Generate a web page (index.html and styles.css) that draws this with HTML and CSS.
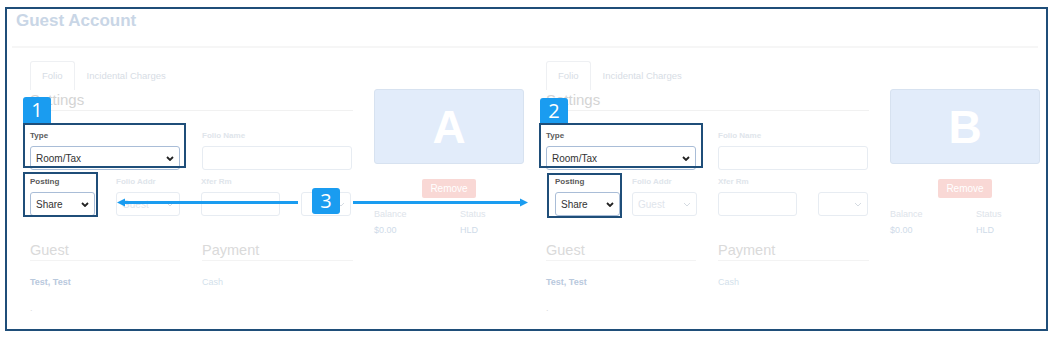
FILE: index.html
```html
<!DOCTYPE html>
<html lang="en">
<head>
    <meta charset="UTF-8">
    <meta name="viewport" content="width=device-width, initial-scale=1.0">
    <link rel="stylesheet" href="styles.css">
</head>
<body>
    <div class="frame">
        <h1 class="page-title">Guest Account</h1>
        <div class="divider"></div>

        <div class="panels">
            <!-- Folio A -->
            <div class="panel">
                <div class="tabs">
                    <div class="tab active">Folio</div>
                    <div class="tab">Incidental Charges</div>
                </div>
                <div class="panel-body">
                    <div class="form-col">
                        <h2 class="settings-title">Settings</h2>
                        <div class="form-row row-type">
                            <div class="field w-wide field-hl">
                                <label>Type</label>
                                <div class="select select-hl"><span>Room/Tax</span><svg class="chev" viewBox="0 0 8 5"><path d="M1 1l3 3 3-3"/></svg></div>
                            </div>
                            <div class="field w-wide">
                                <label>Folio Name</label>
                                <div class="input"></div>
                            </div>
                        </div>
                        <div class="form-row row-posting">
                            <div class="field w-post field-hl posting-field">
                                <label>Posting</label>
                                <div class="select select-hl"><span>Share</span><svg class="chev" viewBox="0 0 8 5"><path d="M1 1l3 3 3-3"/></svg></div>
                            </div>
                            <div class="field w-addr">
                                <label>Folio Addr</label>
                                <div class="select"><span>Guest</span><svg class="chev faint" viewBox="0 0 8 5"><path d="M1 1l3 3 3-3"/></svg></div>
                            </div>
                            <div class="field w-xfer">
                                <label>Xfer Rm</label>
                                <div class="input"></div>
                            </div>
                            <div class="field w-small">
                                <label>&nbsp;</label>
                                <div class="select"><span></span><svg class="chev faint" viewBox="0 0 8 5"><path d="M1 1l3 3 3-3"/></svg></div>
                            </div>
                        </div>
                        <div class="info-grid">
                            <div>
                                <h3 class="info-title">Guest</h3>
                                <div class="info-value guest-name">Test, Test</div>
                                <div class="info-dot">.</div>
                            </div>
                            <div>
                                <h3 class="info-title">Payment</h3>
                                <div class="info-value">Cash</div>
                            </div>
                        </div>
                    </div>
                    <div class="side-col">
                        <div class="folio-card">A</div>
                        <div class="remove-btn">Remove</div>
                        <div class="stats">
                            <span class="stat-label">Balance</span>
                            <span class="stat-label">Status</span>
                            <span class="stat-value">$0.00</span>
                            <span class="stat-value">HLD</span>
                        </div>
                    </div>
                </div>
            </div>

            <!-- Folio B -->
            <div class="panel panel-b">
                <div class="tabs">
                    <div class="tab active">Folio</div>
                    <div class="tab">Incidental Charges</div>
                </div>
                <div class="panel-body">
                    <div class="form-col">
                        <h2 class="settings-title">Settings</h2>
                        <div class="form-row row-type">
                            <div class="field w-wide field-hl">
                                <label>Type</label>
                                <div class="select select-hl"><span>Room/Tax</span><svg class="chev" viewBox="0 0 8 5"><path d="M1 1l3 3 3-3"/></svg></div>
                            </div>
                            <div class="field w-wide">
                                <label>Folio Name</label>
                                <div class="input"></div>
                            </div>
                        </div>
                        <div class="form-row row-posting">
                            <div class="field w-post field-hl posting-field">
                                <label>Posting</label>
                                <div class="select select-hl"><span>Share</span><svg class="chev" viewBox="0 0 8 5"><path d="M1 1l3 3 3-3"/></svg></div>
                            </div>
                            <div class="field w-addr">
                                <label>Folio Addr</label>
                                <div class="select"><span>Guest</span><svg class="chev faint" viewBox="0 0 8 5"><path d="M1 1l3 3 3-3"/></svg></div>
                            </div>
                            <div class="field w-xfer">
                                <label>Xfer Rm</label>
                                <div class="input"></div>
                            </div>
                            <div class="field w-small">
                                <label>&nbsp;</label>
                                <div class="select"><span></span><svg class="chev faint" viewBox="0 0 8 5"><path d="M1 1l3 3 3-3"/></svg></div>
                            </div>
                        </div>
                        <div class="info-grid">
                            <div>
                                <h3 class="info-title">Guest</h3>
                                <div class="info-value guest-name">Test, Test</div>
                                <div class="info-dot">.</div>
                            </div>
                            <div>
                                <h3 class="info-title">Payment</h3>
                                <div class="info-value">Cash</div>
                            </div>
                        </div>
                    </div>
                    <div class="side-col">
                        <div class="folio-card">B</div>
                        <div class="remove-btn">Remove</div>
                        <div class="stats">
                            <span class="stat-label">Balance</span>
                            <span class="stat-label">Status</span>
                            <span class="stat-value">$0.00</span>
                            <span class="stat-value">HLD</span>
                        </div>
                    </div>
                </div>
            </div>
        </div>

        <!-- annotation overlay -->
        <svg class="arrows" viewBox="0 0 1039 320" width="1039" height="320">
            <line x1="291" y1="193.5" x2="117" y2="193.5"/>
            <polygon points="110,193.5 118,189.5 118,197.5"/>
            <line x1="346" y1="193.5" x2="514" y2="193.5"/>
            <polygon points="521,193.5 513,189.5 513,197.5"/>
        </svg>
        <div class="callout box-type-a"></div>
        <div class="callout box-post-a"></div>
        <div class="callout box-type-b"></div>
        <div class="callout box-post-b"></div>
        <div class="badge badge-1">1</div>
        <div class="badge badge-2">2</div>
        <div class="badge badge-3">3</div>
    </div>
</body>
</html>
```

FILE: styles.css
```css
body {
    margin: 0;
    font-family: "Liberation Sans", Arial, sans-serif;
    background-color: #fff;
}

.frame {
    position: relative;
    margin: 7px 0 0 5px;
    width: 1039px;
    height: 320px;
    border: 2px solid #1f4e79;
    overflow: hidden;
}

.page-title {
    margin: 0;
    padding: 2px 0 0 9px;
    font-size: 17px;
    line-height: 20px;
    color: #c9d6e6;
}

.divider {
    margin: 15px 8px 0 5px;
    border-top: 2px solid #f6f6f6;
}

.panels {
    display: flex;
    padding: 13px 0 0 23px;
}

.panel {
    flex: none;
    width: 516px;
}

/* tabs */
.tabs {
    display: flex;
    height: 29px;
}

.tab {
    padding: 0 11px;
    font-size: 9.5px;
    line-height: 28px;
    color: #d7dde5;
    border: 1px solid transparent;
    border-bottom: none;
    border-radius: 3px 3px 0 0;
}

.tab.active {
    border-color: #eef0f3;
}

.panel-body {
    display: grid;
    grid-template-columns: 323px 150px;
    column-gap: 21px;
}

/* form */
.settings-title {
    margin: 0;
    font-size: 15px;
    font-weight: normal;
    line-height: 20px;
    color: #d4d4d4;
    border-bottom: 1px solid #f1f1f1;
}

.form-row {
    display: flex;
    gap: 21px;
}

.row-type {
    margin-top: 20px;
    gap: 22px;
}

.row-posting {
    margin-top: 7px;
}

.field label {
    display: block;
    font-size: 8px;
    font-weight: bold;
    line-height: 10px;
    margin-bottom: 5px;
    color: #e0e5eb;
}

.field-hl label {
    color: #5a5a5a;
}

.w-wide { width: 150px; }
.w-post { width: 65px; }
.w-addr { width: 64px; }
.w-xfer { width: 79px; }
.w-small { width: 50px; }

.panel-b .posting-field {
    margin-left: 9px;
    margin-right: -9px;
}

.panel-b .w-addr {
    width: 65px;
}

.select,
.input {
    box-sizing: border-box;
    height: 24px;
    border: 1px solid #e7ecf2;
    border-radius: 3px;
}

.select {
    display: flex;
    align-items: center;
    justify-content: space-between;
    padding: 0 5px;
    font-size: 10px;
    color: #dfe5ec;
}

.select-hl {
    border-color: #a9bdd7;
    color: #333;
}

.chev {
    width: 8px;
    height: 5px;
    fill: none;
    stroke: #222;
    stroke-width: 1.8;
}

.chev.faint {
    stroke: #d5dbe2;
    stroke-width: 1;
}

/* guest / payment */
.info-grid {
    display: grid;
    grid-template-columns: 150px 151px;
    column-gap: 22px;
    margin-top: 24px;
}

.info-title {
    margin: 0;
    font-size: 14.5px;
    font-weight: normal;
    line-height: 20px;
    color: #dadada;
    border-bottom: 1px solid #f3f3f3;
}

.info-value {
    margin-top: 15px;
    font-size: 9px;
    line-height: 12px;
    color: #d3dfeb;
}

.guest-name {
    font-weight: bold;
    color: #b9c9dd;
}

.info-dot {
    margin-top: 15px;
    font-size: 9px;
    color: #dcdcdc;
}

/* folio card */
.folio-card {
    margin-top: -1px;
    height: 75px;
    box-sizing: border-box;
    display: flex;
    align-items: center;
    justify-content: center;
    background-color: #e2ecfa;
    border: 1px solid #d7e2f0;
    border-radius: 3px;
    font-size: 46px;
    font-weight: bold;
    color: #fff;
}

.remove-btn {
    margin: 15px auto 0;
    width: 54px;
    height: 19px;
    line-height: 19px;
    text-align: center;
    background-color: #f9d8d5;
    border-radius: 2px;
    font-size: 10px;
    color: #fff;
}

.stats {
    display: grid;
    grid-template-columns: 86px 64px;
    row-gap: 4px;
    margin-top: 10px;
    font-size: 9px;
    line-height: 12px;
}

.stat-label {
    color: #dde3ea;
}

.stat-value {
    color: #cfdbe9;
}

/* annotations */
.arrows {
    position: absolute;
    left: 0;
    top: 0;
}

.arrows line {
    stroke: #1a9cf0;
    stroke-width: 3;
}

.arrows polygon {
    fill: #1a9cf0;
}

.callout {
    position: absolute;
    box-sizing: border-box;
    border: 2px solid #1f4e79;
}

.box-type-a { left: 16px; top: 114px; width: 163px; height: 45px; }
.box-post-a { left: 16px; top: 163px; width: 75px; height: 45px; }
.box-type-b { left: 532px; top: 114px; width: 164px; height: 45px; }
.box-post-b { left: 540px; top: 164px; width: 75px; height: 45px; }

.badge {
    position: absolute;
    width: 28px;
    height: 26px;
    background-color: #1a9cf0;
    border-radius: 3px;
    font-family: "Open Sans", sans-serif;
    font-size: 20px;
    line-height: 26px;
    text-align: center;
    color: #fff;
}

.badge-1 { left: 16px; top: 88px; border-radius: 3px 3px 0 0; }
.badge-2 { left: 533px; top: 89px; height: 25px; line-height: 25px; border-radius: 3px 3px 0 0; }
.badge-3 { left: 305px; top: 179px; }
```
